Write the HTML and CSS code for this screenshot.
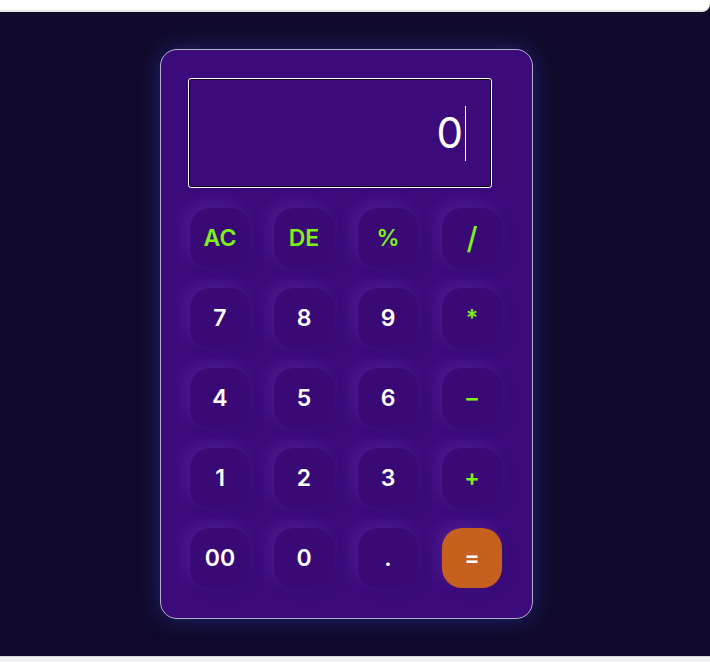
FILE: index.html
```html
<!DOCTYPE html>
<html lang="en">
<head>
<meta charset="utf-8">
<title>Calculator</title>
<link rel="stylesheet" href="styles.css">
</head>
<body>
<div class="topbar"></div>
<main class="stage">
  <div class="calc">
    <div class="display"><span class="value">0</span><span class="caret"></span></div>
    <div class="keys">
      <button class="key op">AC</button>
      <button class="key op">DE</button>
      <button class="key op">%</button>
      <button class="key op slash">/</button>
      <button class="key">7</button>
      <button class="key">8</button>
      <button class="key">9</button>
      <button class="key op">*</button>
      <button class="key">4</button>
      <button class="key">5</button>
      <button class="key">6</button>
      <button class="key op">–</button>
      <button class="key">1</button>
      <button class="key">2</button>
      <button class="key">3</button>
      <button class="key op">+</button>
      <button class="key">00</button>
      <button class="key">0</button>
      <button class="key">.</button>
      <button class="key equal">=</button>
    </div>
  </div>
</main>
<div class="bottombar"></div>
</body>
</html>
```
FILE: styles.css
```css
* { box-sizing: border-box; }
html, body { margin: 0; padding: 0; }
body {
  width: 710px;
  height: 662px;
  overflow: hidden;
  background: #110a2b;
  font-family: "Inter", "Roboto", sans-serif;
  display: flex;
  flex-direction: column;
}
.topbar {
  height: 12px;
  background: #ffffff;
  border-bottom: 2px solid #e9e9ec;
  border-bottom-right-radius: 8px;
  flex: none;
}
.stage {
  flex: 1;
  display: flex;
  align-items: center;
  padding-left: 160px;
}
.bottombar {
  height: 6px;
  flex: none;
  background: #f2f2f4;
  border-top: 1px solid #d7d7dc;
}
.calc {
  width: 373px;
  height: 570px;
  background: #3b0b7b;
  border: 1px solid #b5b0c8;
  border-radius: 17px;
  box-shadow: 0 0 22px rgba(42, 58, 170, 0.55);
  padding: 28px 29px 29px 27px;
  display: flex;
  flex-direction: column;
  gap: 20px;
}
.display {
  width: 304px;
  height: 110px;
  border: 1px solid #ffffff;
  box-shadow: inset 0 0 0 1px #0c0620;
  border-radius: 3px;
  display: flex;
  justify-content: flex-end;
  align-items: center;
  padding-right: 25px;
  color: #ffffff;
}
.value {
  font-size: 42px;
  font-weight: 400;
  line-height: 1;
  letter-spacing: 1px;
}
.caret {
  width: 1px;
  height: 55px;
  background: #ffffff;
  margin-left: 1px;
}
.keys {
  display: grid;
  grid-template-columns: repeat(4, 60px);
  grid-auto-rows: 60px;
  column-gap: 24px;
  row-gap: 20px;
  padding-left: 2px;
}
.key {
  border: none;
  border-radius: 20px;
  background: #390a76;
  color: #ffffff;
  font-family: inherit;
  font-size: 23px;
  font-weight: 600;
  padding: 0;
  display: flex;
  align-items: center;
  justify-content: center;
  box-shadow: -5px -5px 15px rgba(150, 100, 230, 0.2), 4px 4px 12px rgba(30, 0, 70, 0.12);
  cursor: pointer;
}
.op { color: #7cf21a; }
.slash { font-size: 30px; font-weight: 500; }
.equal {
  background: #c5601f;
}
```
